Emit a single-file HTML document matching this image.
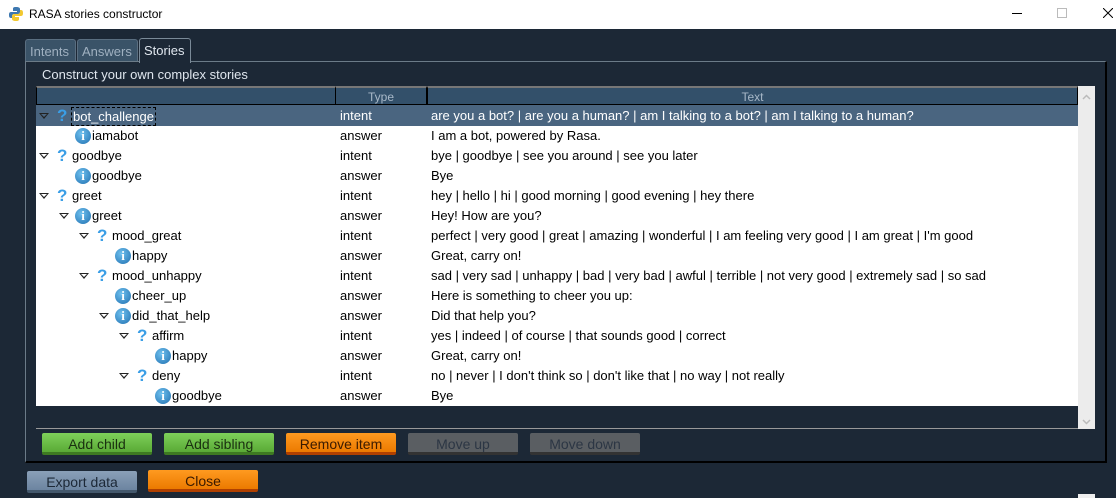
<!DOCTYPE html>
<html><head><style>
*{margin:0;padding:0;box-sizing:border-box}
body{width:1116px;height:498px;background:#1c2836;font-family:"Liberation Sans",sans-serif;font-size:13px;position:relative;overflow:hidden}
.title{position:absolute;left:0;top:0;width:1116px;height:29px;background:#fff;color:#000;font-size:12px}
.abs{position:absolute}
.tab{position:absolute;top:39px;height:23px;border:1px solid #5a6e80;border-bottom:none;border-radius:3px 3px 0 0;background:#3a5368;color:#9fb0c0;font-size:13px;padding:4px 4px 0}
.panel{position:absolute;left:25px;top:61px;width:1082px;height:402px;border-top:1px solid #6b7b88;border-left:1px solid #6b7b88;border-right:2px solid #000;border-bottom:2px solid #000}
.tree{position:absolute;left:36px;top:86px;width:1042px;height:343px;background:#1c2836;border-bottom:1px solid #999}
.hdr{position:absolute;top:0;height:19px;background:#33506a;color:#a8b8c8;font-size:12px;text-align:center;line-height:18px;border:1px solid #000;border-top:2px solid #777}
.row{position:absolute;left:0;width:1042px;height:20px;background:#fff;color:#000;line-height:20px}
.row.sel{background:#4a6580;color:#fff}
.row span{position:absolute;top:0;white-space:nowrap}
.tri{position:absolute;top:7px;width:0;height:0;border-left:5px solid transparent;border-right:5px solid transparent;border-top:6px solid #222}
.tri:after{content:"";position:absolute;left:-3px;top:-5px;border-left:3px solid transparent;border-right:3px solid transparent;border-top:3.5px solid #fff}
.sel .tri:after{border-top-color:#4a6580}
.q{position:absolute;top:0;color:#3a9ee6;font-weight:bold;font-size:17px;line-height:20px}
.i{position:absolute;top:2px;width:16px;height:16px;border-radius:50%;background:radial-gradient(circle at 40% 35%,#6fc0ee,#1f6fb0);color:#fff;font:bold 13px/16px "Liberation Serif",serif;text-align:center}
.btn{position:absolute;height:22px;width:110px;text-align:center;line-height:22px;font-size:14px;border-radius:2px}
.g{background:linear-gradient(#7ed05a,#5aaa36);color:#1a3010;border-bottom:3px solid #3e7a22}
.o{background:linear-gradient(#ff9a20,#ec7a00);color:#3a1a00;border-bottom:3px solid #b04000}
.d{background:#5a5e62;color:#2c3644;border-bottom:3px solid #333}
.b{background:linear-gradient(#8aa0b8,#6c84a0);color:#1c2836;border-bottom:3px solid #44586c}
.sb{position:absolute;left:1078px;top:86px;width:17px;height:343px;background:#ececec}
</style></head><body>
<div class="title">
<svg class="abs" style="left:8px;top:6px" width="16" height="16" viewBox="0 0 16 16"><path d="M8 1c-3 0-3 1-3 2v2h4v1H3C1 6 1 8 1 9s0 3 2 3h1v-2c0-1 1-2 2-2h4c1 0 2-1 2-2V3c0-1-1-2-4-2z" fill="#3d78b0"/><path d="M8 15c3 0 3-1 3-2v-2H7v-1h6c2 0 2-2 2-3s0-3-2-3h-1v2c0 1-1 2-2 2H6c-1 0-2 1-2 2v3c0 1 1 2 4 2z" fill="#f2c830"/></svg>
<span class="abs" style="left:29px;top:7px">RASA stories constructor</span>
<div class="abs" style="left:1012px;top:13px;width:10px;height:1px;background:#000"></div>
<div class="abs" style="left:1057px;top:8px;width:10px;height:10px;border:1px solid #bbb"></div>
<svg class="abs" style="left:1103px;top:8px" width="10" height="10"><path d="M0 0L10 10M10 0L0 10" stroke="#000" stroke-width="1"/></svg>
</div>
<div class="tab" style="left:25px;width:51px">Intents</div>
<div class="tab" style="left:77px;width:61px">Answers</div>
<div class="tab" style="left:139px;width:52px;background:#1c2836;color:#dfe6ee;top:38px;height:25px;border-color:#7a8a98;z-index:2">Stories</div>
<div class="panel"></div>
<div class="abs" style="left:42px;top:67px;color:#dfe6ee;font-size:13px">Construct your own complex stories</div>
<div class="tree">
<div class="hdr" style="left:0;width:300px"></div>
<div class="hdr" style="left:299px;width:92px">Type</div>
<div class="hdr" style="left:391px;width:651px">Text</div>
<div class="row sel" style="top:19px;height:21px;line-height:22px"><div class="tri" style="left:3px;top:8px"></div><span class="q" style="left:21px;top:1px">?</span><span style="left:35px;border:1px dashed #000;line-height:17px;top:2px;padding:0 1px">bot_challenge</span><span style="left:304px">intent</span><span style="left:395px">are you a bot? | are you a human? | am I talking to a bot? | am I talking to a human?</span></div>
<div class="row" style="top:40px"><div class="i" style="left:39px">i</div><span style="left:56px">iamabot</span><span style="left:304px">answer</span><span style="left:395px">I am a bot, powered by Rasa.</span></div>
<div class="row" style="top:60px"><div class="tri" style="left:3px"></div><span class="q" style="left:21px">?</span><span style="left:36px">goodbye</span><span style="left:304px">intent</span><span style="left:395px">bye | goodbye | see you around | see you later</span></div>
<div class="row" style="top:80px"><div class="i" style="left:39px">i</div><span style="left:56px">goodbye</span><span style="left:304px">answer</span><span style="left:395px">Bye</span></div>
<div class="row" style="top:100px"><div class="tri" style="left:3px"></div><span class="q" style="left:21px">?</span><span style="left:36px">greet</span><span style="left:304px">intent</span><span style="left:395px">hey | hello | hi | good morning | good evening | hey there</span></div>
<div class="row" style="top:120px"><div class="tri" style="left:23px"></div><div class="i" style="left:39px">i</div><span style="left:56px">greet</span><span style="left:304px">answer</span><span style="left:395px">Hey! How are you?</span></div>
<div class="row" style="top:140px"><div class="tri" style="left:43px"></div><span class="q" style="left:61px">?</span><span style="left:76px">mood_great</span><span style="left:304px">intent</span><span style="left:395px">perfect | very good | great | amazing | wonderful | I am feeling very good | I am great | I'm good</span></div>
<div class="row" style="top:160px"><div class="i" style="left:79px">i</div><span style="left:96px">happy</span><span style="left:304px">answer</span><span style="left:395px">Great, carry on!</span></div>
<div class="row" style="top:180px"><div class="tri" style="left:43px"></div><span class="q" style="left:61px">?</span><span style="left:76px">mood_unhappy</span><span style="left:304px">intent</span><span style="left:395px">sad | very sad | unhappy | bad | very bad | awful | terrible | not very good | extremely sad | so sad</span></div>
<div class="row" style="top:200px"><div class="i" style="left:79px">i</div><span style="left:96px">cheer_up</span><span style="left:304px">answer</span><span style="left:395px">Here is something to cheer you up:</span></div>
<div class="row" style="top:220px"><div class="tri" style="left:63px"></div><div class="i" style="left:79px">i</div><span style="left:96px">did_that_help</span><span style="left:304px">answer</span><span style="left:395px">Did that help you?</span></div>
<div class="row" style="top:240px"><div class="tri" style="left:83px"></div><span class="q" style="left:101px">?</span><span style="left:116px">affirm</span><span style="left:304px">intent</span><span style="left:395px">yes | indeed | of course | that sounds good | correct</span></div>
<div class="row" style="top:260px"><div class="i" style="left:119px">i</div><span style="left:136px">happy</span><span style="left:304px">answer</span><span style="left:395px">Great, carry on!</span></div>
<div class="row" style="top:280px"><div class="tri" style="left:83px"></div><span class="q" style="left:101px">?</span><span style="left:116px">deny</span><span style="left:304px">intent</span><span style="left:395px">no | never | I don't think so | don't like that | no way | not really</span></div>
<div class="row" style="top:300px"><div class="i" style="left:119px">i</div><span style="left:136px">goodbye</span><span style="left:304px">answer</span><span style="left:395px">Bye</span></div>
</div>
<div class="sb">
<svg class="abs" style="left:4px;top:8px" width="9" height="6"><path d="M1 5L4.5 1.5L8 5" stroke="#bbb" stroke-width="1.5" fill="none"/></svg>
<svg class="abs" style="left:4px;top:333px" width="9" height="6"><path d="M1 1L4.5 4.5L8 1" stroke="#bbb" stroke-width="1.5" fill="none"/></svg>
</div>
<div class="btn g" style="left:42px;top:433px">Add child</div>
<div class="btn g" style="left:164px;top:433px">Add sibling</div>
<div class="btn o" style="left:286px;top:433px">Remove item</div>
<div class="btn d" style="left:408px;top:433px">Move up</div>
<div class="btn d" style="left:530px;top:433px">Move down</div>
<div class="btn b" style="left:27px;top:471px">Export data</div>
<div class="btn o" style="left:148px;top:470px">Close</div>
<div class="abs" style="left:1078px;top:494px;width:17px;height:4px;background:#eee"></div>
</body></html>
